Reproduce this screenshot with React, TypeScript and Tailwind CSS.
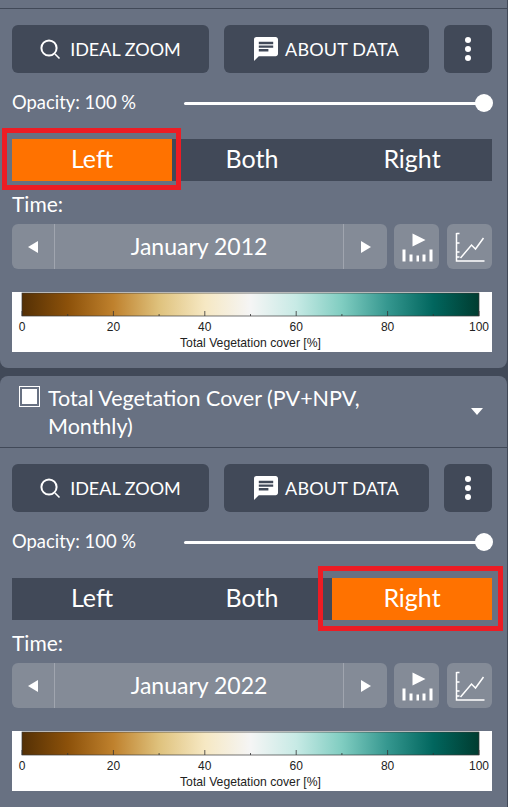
const stops = [
  ['0%', '#543005'], ['10%', '#8c510a'], ['20%', '#bf812d'], ['30%', '#dfc27d'], ['40%', '#f6e8c3'], ['50%', '#f5f5f5'],
  ['60%', '#c7eae5'], ['70%', '#80cdc1'], ['80%', '#35978f'], ['90%', '#01665e'], ['100%', '#003c30'],
]

function SearchIcon() {
  return (
    <svg width="21" height="21" viewBox="0 0 21 21" fill="none" stroke="white">
      <circle cx="9" cy="9" r="7.600" strokeWidth="2" />
      <path d="M15 15l4.500 4.500" strokeWidth="1.600" />
    </svg>
  )
}

function ChatIcon() {
  return (
    <svg width="24" height="24" viewBox="2 2 20 20" fill="white">
      <path d="M20 2H4c-1.1 0-1.99.9-1.99 2L2 22l4-4h14c1.1 0 2-.9 2-2V4c0-1.1-.9-2-2-2zM6 9h12v2H6V9zm8 5H6v-2h8v2zm4-6H6V6h12v2z" />
    </svg>
  )
}

function AnimateIcon() {
  return (
    <svg width="32" height="30" viewBox="0 0 32 30" fill="white">
      <path d="M11.500 1.500l13 6.500-13 6.500z" />
      <rect x="1.500" y="17.500" width="3" height="12" />
      <rect x="8.500" y="22.500" width="3" height="7" />
      <rect x="15.500" y="23.500" width="2.500" height="6" />
      <rect x="21.500" y="22.500" width="3" height="7" />
      <rect x="28.500" y="17.500" width="3" height="12" />
    </svg>
  )
}

function ChartIcon() {
  return (
    <svg width="32" height="31" viewBox="0 0 32 31" fill="none" stroke="white" strokeWidth="1.500">
      <path d="M2.500 2v28h28M2.500 2.500h3M2.500 12h3M2.500 21h3M2.500 26h3" />
      <path d="M6.500 27l11-13 4 4 8-11" />
    </svg>
  )
}

function ColorBar({ id }: { id: string }) {
  const labels = [0, 20, 40, 60, 80, 100]
  return (
    <svg className="mt-[23px] block bg-white" width="480" height="60" viewBox="0 0 480 60">
      <defs>
        <linearGradient id={id}>
          {stops.map(([offset, color]) => (
            <stop key={offset} offset={offset} stopColor={color} />
          ))}
        </linearGradient>
      </defs>
      <rect x="10" y="1" width="457" height="23" fill={`url(#${id})`} stroke="#3a3a3a" strokeWidth="0.700" />
      {Array.from({ length: 11 }).map((_, i) => (
        <line key={i} x1={10 + i * 45.700} x2={10 + i * 45.700} y1={24} y2={i % 2 ? 22 : 19} stroke="#333" strokeWidth="0.800" />
      ))}
      {labels.map((n, i) => (
        <text key={n} x={10 + i * 91.400} y="39" textAnchor="middle" fontSize="12" fill="#222" fontFamily="Liberation Sans, sans-serif">
          {n}
        </text>
      ))}
      <text x="238.500" y="54.500" textAnchor="middle" fontSize="12.200" fill="#222" fontFamily="Liberation Sans, sans-serif">
        Total Vegetation cover [%]
      </text>
    </svg>
  )
}

function LayerControls({ side, month, id }: { side: 'Left' | 'Right'; month: string; id: string }) {
  return (
    <div className="relative pl-3 pr-[15px] pt-4 text-white">
      <div className="flex gap-[15px]">
        <button className="flex h-12 w-[197px] items-center justify-center gap-[9px] rounded-md bg-[#414958] text-[18px]">
          <SearchIcon />
          IDEAL ZOOM
        </button>
        <button className="flex h-12 w-[205px] items-center justify-center gap-[7px] rounded-md bg-[#414958] text-[18px] tracking-[0.2px]">
          <ChatIcon />
          ABOUT DATA
        </button>
        <button className="flex h-12 w-12 flex-col items-center justify-center gap-[3px] rounded-md bg-[#414958]">
          <span className="h-[6px] w-[6px] rounded-full bg-white" />
          <span className="h-[6px] w-[6px] rounded-full bg-white" />
          <span className="h-[6px] w-[6px] rounded-full bg-white" />
        </button>
      </div>

      <div className="mt-[18px] flex h-[24px] items-center">
        <span className="w-[172px] pb-[1px] text-[18.400px]">Opacity: 100 %</span>
        <div className="relative h-[3px] flex-1 rounded-full bg-white">
          <span className="absolute -top-[8px] -right-[1px] h-[18px] w-[18px] rounded-full bg-white" />
        </div>
      </div>

      <div className="relative mt-[24px] grid h-[42px] grid-cols-3 bg-[#414958] text-[25px]">
        {['Left', 'Both', 'Right'].map((t) => (
          <div key={t} className={`flex items-center justify-center pb-[3px] ${t === side ? 'bg-[#ff7200]' : ''}`}>
            {t}
          </div>
        ))}
        {side === 'Left' ? (
          <div className="absolute -top-[11px] -left-[10px] h-[62px] w-[179px] border-[5px] border-[#ed1c24]" />
        ) : (
          <div className="absolute -top-[12px] -right-[11px] h-[65px] w-[185px] border-[5px] border-[#ed1c24]" />
        )}
      </div>

      <div className="mt-[10px] h-[26px] text-[21px] leading-[26px]">Time:</div>

      <div className="mt-[7px] flex h-[45px] gap-[7px]">
        <div className="flex w-[375px] overflow-hidden rounded-md bg-[#848b97]">
          <div className="flex w-[43px] items-center justify-center border-r border-[#a0a5af]">
            <span className="h-0 w-0 border-y-[6px] border-r-[10px] border-y-transparent border-r-white" />
          </div>
          <div className="flex flex-1 items-center justify-center text-[23px]">{month}</div>
          <div className="flex w-[44px] items-center justify-center border-l border-[#a0a5af]">
            <span className="h-0 w-0 border-y-[6px] border-l-[10px] border-y-transparent border-l-white" />
          </div>
        </div>
        <div className="flex w-[45px] items-center justify-center rounded-md bg-[#848b97]">
          <AnimateIcon />
        </div>
        <div className="ml-px flex w-[45px] items-center justify-center rounded-md bg-[#848b97]">
          <ChartIcon />
        </div>
      </div>

      <ColorBar id={id} />
    </div>
  )
}

export default function App() {
  return (
    <div className="h-[807px] w-[508px] overflow-hidden bg-[#414958] pr-px font-['Lato',sans-serif]">
      <div className="h-[368px] rounded-b-lg bg-[#687182]">
        <div className="h-[9px] border-b border-[#414958]" />
        <LayerControls side="Left" month="January 2012" id="bar-left" />
      </div>

      <div className="mt-2 h-[431px] rounded-t-lg bg-[#687182]">
        <div className="flex h-[72px] items-start border-b border-[#414958] pt-[8px] pl-[19px] pr-[24px] text-white">
          <span className="mt-[2px] flex h-[21px] w-[21px] shrink-0 items-center justify-center border border-white">
            <span className="h-[15px] w-[15px] bg-white" />
          </span>
          <span className="ml-[8px] w-[340px] text-[21.500px] leading-[28px]">Total Vegetation Cover (PV+NPV, Monthly)</span>
          <span className="mt-[24px] ml-auto h-0 w-0 border-x-[6px] border-t-[7px] border-x-transparent border-t-white" />
        </div>
        <LayerControls side="Right" month="January 2022" id="bar-right" />
      </div>
    </div>
  )
}
